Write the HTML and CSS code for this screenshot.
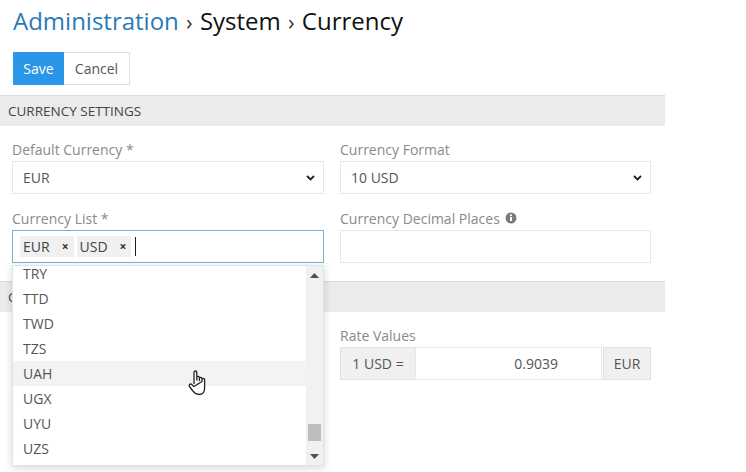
FILE: index.html
```html
<!DOCTYPE html>
<html lang="en">
<head>
<meta charset="utf-8">
<title>Currency</title>
<link rel="stylesheet" href="styles.css">
</head>
<body>
<div class="page">
  <h1 class="title"><a class="crumb-link">Administration</a> <span class="sep">›</span> System <span class="sep">›</span> Currency</h1>
  <div class="toolbar">
    <button class="btn btn-primary">Save</button>
    <button class="btn btn-default">Cancel</button>
  </div>
  <div class="section-bar">CURRENCY SETTINGS</div>
  <div class="form-grid">
    <div class="field">
      <label class="label">Default Currency *</label>
      <select class="control select"><option>EUR</option></select>
    </div>
    <div class="field">
      <label class="label">Currency Format</label>
      <select class="control select"><option>10 USD</option></select>
    </div>
    <div class="field">
      <label class="label">Currency List *</label>
      <div class="control tags">
        <span class="tag">EUR<i class="tag-x">×</i></span>
        <span class="tag">USD<i class="tag-x">×</i></span>
        <span class="caret"></span>
      </div>
      <div class="dropdown">
        <ul class="options">
          <li>TRY</li>
          <li>TTD</li>
          <li>TWD</li>
          <li>TZS</li>
          <li class="hover">UAH</li>
          <li>UGX</li>
          <li>UYU</li>
          <li>UZS</li>
        </ul>
        <div class="scrollbar">
          <svg class="arrow" width="9" height="5" viewBox="0 0 9 5"><path d="M0 5 4.500 0 9 5z" fill="#505050"/></svg>
          <div class="thumb"></div>
          <svg class="arrow" width="9" height="5" viewBox="0 0 9 5"><path d="M0 0 4.500 5 9 0z" fill="#505050"/></svg>
        </div>
        <svg class="hand" width="20" height="27" viewBox="0 0 20 27">
          <path d="M6 15V3.500C6 1.500 8.800 1.500 8.800 3.500V11.500M8.800 11V8.500C8.800 7 11.400 7 11.400 8.500V12M11.400 12V9.500C11.400 8 14 8 14 9.500V12.500M14 12.500V10.500C14 9 16.600 9 16.600 10.500V19C16.600 23 14.500 25.500 11 25.500C7.500 25.500 6.500 24 4.500 21.500L1.500 17.500C0.500 16 2.300 14.300 3.700 15.500L6 17.500Z" fill="#fff" stroke="#222" stroke-width="1.300" stroke-linejoin="round"/>
        </svg>
      </div>
    </div>
    <div class="field">
      <label class="label">Currency Decimal Places<svg class="info" width="12" height="12" viewBox="0 0 12 12"><circle cx="6" cy="6" r="5.500" fill="#7b7b7b"/><rect x="5" y="5" width="2" height="4" fill="#fff"/><rect x="5" y="2.500" width="2" height="1.600" fill="#fff"/></svg></label>
      <input class="control" type="text">
    </div>
  </div>
  <div class="section-bar">CURRENCY RATES</div>
  <div class="form-grid rates-grid">
    <div class="field"></div>
    <div class="field">
      <label class="label">Rate Values</label>
      <div class="rate-group">
        <span class="addon addon-left">1 USD =</span>
        <input class="control rate-input" type="text" value="0.9039">
        <span class="addon addon-right">EUR</span>
      </div>
    </div>
  </div>
</div>
</body>
</html>
```

FILE: styles.css
```css
* { box-sizing: border-box; }
html, body { margin: 0; padding: 0; background: #fff; }
body { font-family: "Open Sans", sans-serif; font-size: 14px; color: #555; overflow: hidden; }
.page { width: 746px; height: 472px; overflow: hidden; }

.title { margin: 0; padding: 4px 0 0 13px; height: 52px; font-size: 24px; line-height: 33px; font-weight: 400; color: #111; }
.crumb-link { color: #2a7ab8; }
.sep { font-size: 22px; color: #333; margin: 0 1px; }

.toolbar { display: flex; height: 33px; padding-left: 13px; margin-bottom: 10px; }
.btn { font: 14px "Open Sans", sans-serif; height: 33px; padding: 0; border-radius: 0; }
.btn-primary { width: 51px; background: #2b96e8; color: #fff; border: 0; }
.btn-default { width: 66px; background: #fff; color: #555; border: 1px solid #e0e0e0; border-left: 0; }

.section-bar { width: 665px; height: 31px; padding-left: 8px; background: #ebebeb; border-top: 1px solid #dcdcdc; font-size: 13.500px; line-height: 30px; color: #444; }

.form-grid { display: grid; grid-template-columns: 312px 311px; gap: 14px 16px; padding: 13px 0 18px 12px; width: 665px; }
.field { position: relative; }
.label { display: flex; align-items: center; gap: 5px; height: 20px; font-size: 14px; color: #8a8a8a; margin-bottom: 2px; white-space: pre; }
.info { flex: none; }

.control { display: block; width: 100%; height: 33px; background: #fff; border: 1px solid #e6e6e6; border-radius: 0; font: 14px "Open Sans", sans-serif; color: #555; padding: 0 10px; outline: 0; }
.select { appearance: none; padding-left: 10px; background-image: url("data:image/svg+xml,%3Csvg xmlns='http://www.w3.org/2000/svg' width='9' height='6' viewBox='0 0 9 6'%3E%3Cpath d='M1 1l3.500 3.500L8 1' fill='none' stroke='%23222' stroke-width='1.800'/%3E%3C/svg%3E"); background-repeat: no-repeat; background-position: right 8px center; }

.tags { display: flex; align-items: center; gap: 3px; padding: 0 7px; border-color: #7fb2cf; }
.tag { display: inline-flex; align-items: center; height: 21px; padding: 0 5px 0 3px; background: #f0f0f0; color: #444; white-space: pre; }
.tag-x { font-style: normal; font-weight: 700; font-size: 12px; margin-left: 12px; color: #333; }
.caret { width: 1px; height: 19px; background: #222; margin-left: 1px; }

.dropdown { position: absolute; left: 0; top: 57px; width: 312px; height: 201px; display: flex; background: #fff; border: 1px solid #e2e2e2; box-shadow: 0 2px 8px rgba(0,0,0,.16); overflow: hidden; z-index: 2; }
.options { list-style: none; margin: -5px 0 0; padding: 0; flex: 1; color: #555; }
.options li { height: 25px; line-height: 25px; padding-left: 10px; }
.options li.hover { background: #f3f3f3; }
.scrollbar { width: 17px; background: #f1f1f1; display: flex; flex-direction: column; align-items: center; padding: 7px 0 6px; }
.arrow { flex: none; }
.thumb { width: 13px; height: 17px; background: #bdbdbd; margin-top: auto; margin-bottom: 13px; }
.hand { position: absolute; left: 175px; top: 103px; }

.rate-group { display: flex; height: 33px; }
.addon { display: flex; align-items: center; justify-content: center; flex: none; background: #f0f0f0; border: 1px solid #e0e0e0; color: #555; }
.addon-left { width: 75px; border-right: 0; }
.addon-right { width: 48px; margin-left: 1px; }
.rate-input { flex: 1; width: auto; min-width: 0; text-align: right; padding-right: 43px; }
```
